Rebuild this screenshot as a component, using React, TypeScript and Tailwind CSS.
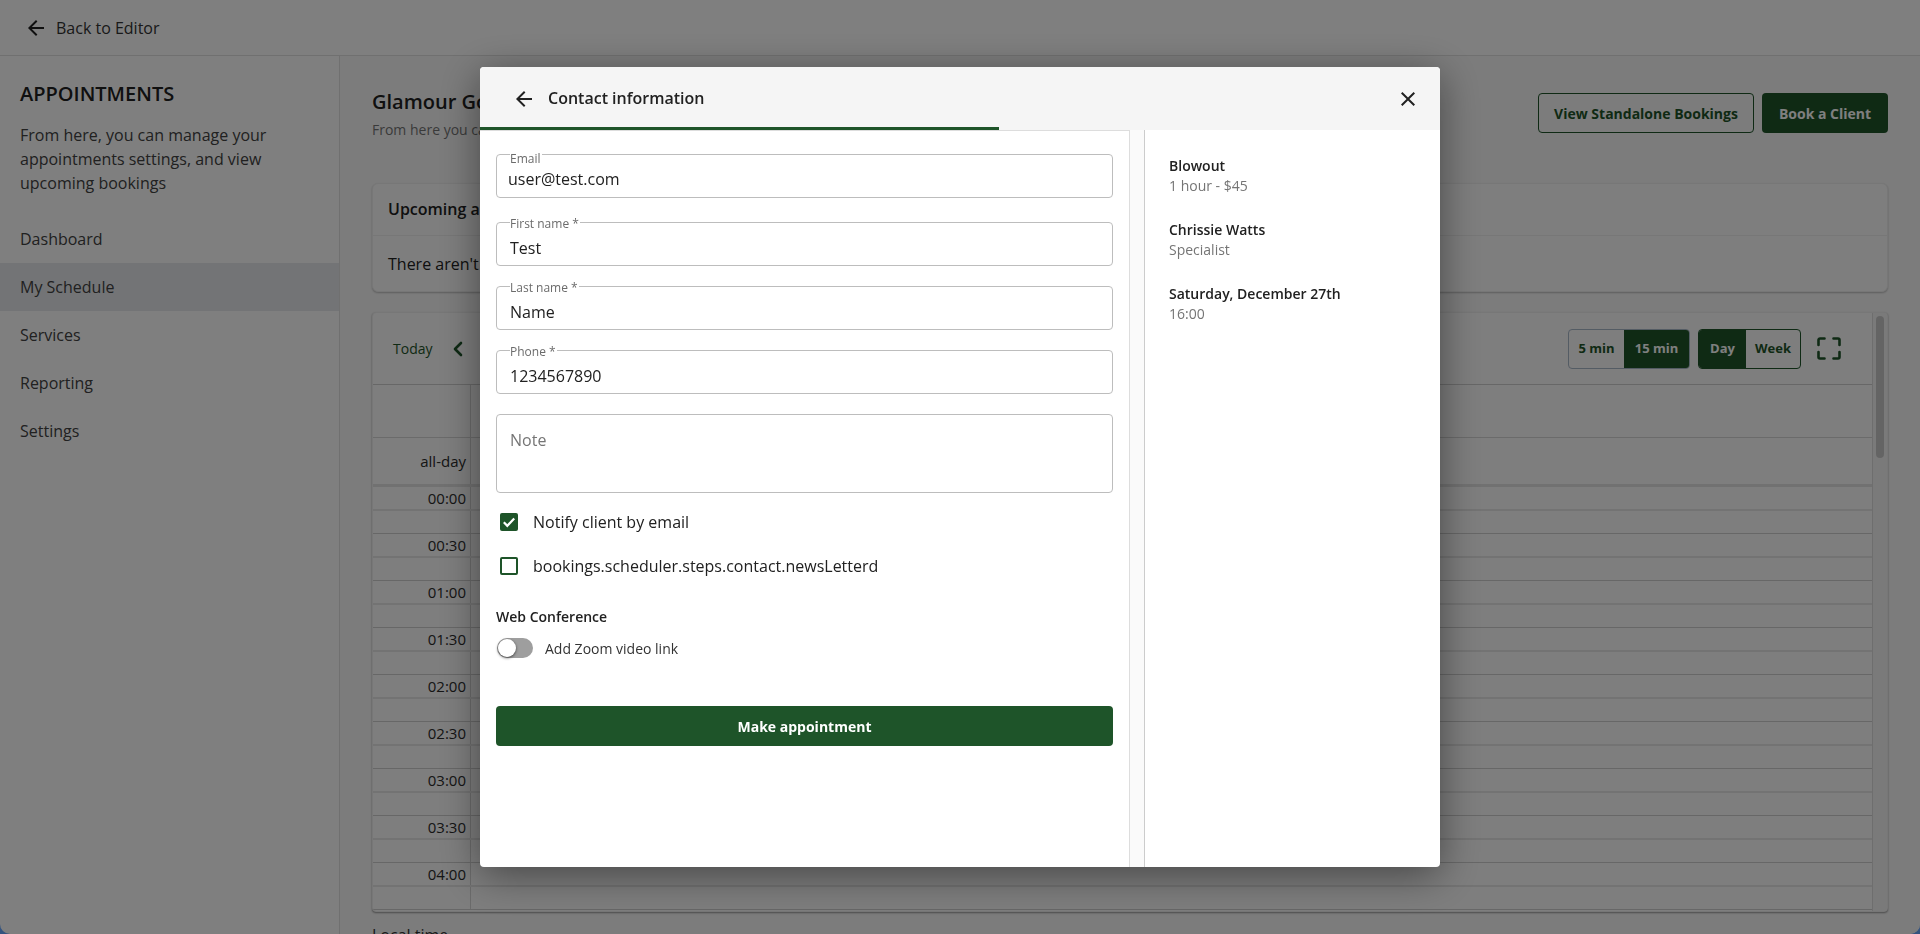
import React from "react";

const BackArrow = ({ className = "" }: { className?: string }) => (
  <svg viewBox="0 0 24 24" width="24" height="24" fill="currentColor" className={className}>
    <path d="M20 11H7.83l5.59-5.59L12 4l-8 8 8 8 1.41-1.41L7.83 13H20v-2z" />
  </svg>
);

const Close = () => (
  <svg viewBox="0 0 24 24" width="24" height="24" fill="currentColor">
    <path d="M19 6.41 17.59 5 12 10.59 6.41 5 5 6.41 10.59 12 5 17.59 6.41 19 12 13.41 17.59 19 19 17.59 13.41 12z" />
  </svg>
);

const Field = ({ label, value, narrow }: { label: string; value: string; narrow?: boolean }) => (
  <div className="relative h-[44px] w-[617px] rounded-[4px] border border-[#bdbdbd] bg-white">
    <span className={`absolute left-[13px] bg-white pr-[1px] text-[12px] leading-[12px] text-[#6b6b6b] ${narrow ? "top-[-2px]" : "top-[-5px]"}`}>{label}</span>
    <div className={`absolute text-[16px] leading-[22px] text-[#212121] ${narrow ? "left-[11px] top-[13px]" : "left-[13px] top-[14px]"}`}>{value}</div>
  </div>
);

const times = ["00:00", "00:30", "01:00", "01:30", "02:00", "02:30", "03:00", "03:30", "04:00"];

const NavItem = ({ label, active }: { label: string; active?: boolean }) => (
  <div className={`flex h-[48px] items-center px-5 text-[16px] text-[#424242] ${active ? "bg-[#e6e9ed]" : ""}`}>{label}</div>
);

const Seg = ({ label, active, w }: { label: string; active?: boolean; w: string }) => (
  <div className={`flex h-full items-center justify-center text-[13px] font-bold ${w} ${active ? "bg-[#1e5429] text-white" : "text-[#1e5429]"}`}>{label}</div>
);

export default function App() {
  return (
    <div className="relative h-[934px] w-full overflow-hidden bg-[#6aa8ff] font-['Open_Sans',sans-serif]">
      <div className="flex h-full flex-col overflow-hidden rounded-b-[10px] bg-white">
        <header className="flex h-[56px] shrink-0 items-center border-b border-[#e0e0e0] pl-6 text-[#212121]">
          <BackArrow />
          <span className="ml-2 text-[16px] text-[#333]">Back to Editor</span>
        </header>
        <div className="flex min-h-0 flex-1">
          <aside className="w-[340px] shrink-0 border-r border-[#e0e0e0]">
            <h1 className="px-5 pt-[23px] text-[20px] font-semibold leading-[30px] text-[#212121]">APPOINTMENTS</h1>
            <p className="mt-[14px] px-5 text-[16px] leading-[24px] text-[#424242]">
              From here, you can manage your
              <br />
              appointments settings, and view
              <br />
              upcoming bookings
            </p>
            <nav className="mt-[20px]">
              <NavItem label="Dashboard" />
              <NavItem label="My Schedule" active />
              <NavItem label="Services" />
              <NavItem label="Reporting" />
              <NavItem label="Settings" />
            </nav>
          </aside>
          <main className="min-w-0 flex-1 bg-[#f9f9f9] px-8">
            <div className="flex h-[127px] items-start justify-between pt-[37px]">
              <div>
                <div className="mt-[-8px] mb-px text-[20px] font-semibold leading-[34px] text-[#212121]">Glamour Gowns Schedule</div>
                <div className="text-[14px] leading-[20px] text-[#757575]">From here you can manage your schedule</div>
              </div>
              <div className="flex gap-2">
                <div className="flex h-[40px] w-[216px] items-center justify-center rounded-[4px] border border-[#1e5429] text-[14px] font-bold text-[#1e5429]">View Standalone Bookings</div>
                <div className="flex h-[40px] w-[126px] items-center justify-center rounded-[4px] bg-[#1e5429] text-[14px] font-bold text-white">Book a Client</div>
              </div>
            </div>
            <section className="h-[109px] rounded-[6px] border border-[#eeeeee] bg-[#fdfdfd] shadow-[0_1px_2px_rgba(0,0,0,0.25)]">
              <div className="flex h-[52px] items-center border-b border-[#eeeeee] px-[15px] pb-[2px] text-[16px] font-semibold text-[#212121]">Upcoming appointments</div>
              <div className="flex h-[56px] items-center px-[15px] text-[16px] text-[#212121]">There aren't any upcoming appointments</div>
            </section>
            <section className="mt-5 flex h-[600px] overflow-hidden rounded-[4px] border border-[#eeeeee] bg-[#fcfcfc] shadow-[0_1px_2px_rgba(0,0,0,0.4)]">
              <div className="min-w-0 flex-1 border-r border-[#dddddd]">
                <div className="flex h-[72px] items-center justify-between border-b border-[#cfcfcf] pl-5 pr-[31px]">
                  <div className="flex items-center">
                    <span className="text-[14px] font-medium text-[#1e5429]">Today</span>
                    <svg viewBox="0 0 12 16" width="12" height="16" className="ml-[19px] text-[#1e5429]" fill="none" stroke="currentColor" strokeWidth="2.6" strokeLinecap="round" strokeLinejoin="round">
                      <path d="M9 2 3 8l6 6" />
                    </svg>
                  </div>
                  <div className="flex items-center">
                    <div className="flex h-[40px] overflow-hidden rounded-[4px] border border-[#a9b8c9]">
                      <Seg label="5 min" w="w-[55px]" />
                      <Seg label="15 min" active w="w-[65px]" />
                    </div>
                    <div className="ml-2 flex h-[40px] overflow-hidden rounded-[4px] border border-[#1e5429]">
                      <Seg label="Day" active w="w-[47px]" />
                      <Seg label="Week" w="w-[54px]" />
                    </div>
                    <svg viewBox="0 0 24 23" width="24" height="23" className="ml-[16px] text-[#1e5429]" fill="none" stroke="currentColor" strokeWidth="2.6" strokeLinejoin="round" strokeLinecap="round">
                      <path d="M1.500 8V3a1.500 1.500 0 0 1 1.500-1.500H7.500M16.500 1.500H21A1.500 1.500 0 0 1 22.500 3V8M22.500 15v5a1.500 1.500 0 0 1-1.500 1.500H16.500M7.500 21.500H3A1.500 1.500 0 0 1 1.500 20V15" />
                    </svg>
                  </div>
                </div>
                <div className="flex h-[53px] border-b border-[#d6d6d6]">
                  <div className="w-[98px] border-r border-[#d6d6d6]" />
                </div>
                <div className="flex h-[49px] border-b-[3px] border-[#e3e3e3]">
                  <div className="w-[98px] border-r border-[#d6d6d6] pr-[4px] pt-[13px] text-right text-[15px] leading-[20px] text-[#2b2b2b]">all-day</div>
                </div>
                {times.map((t) => (
                  <div key={t} className="flex h-[47px] flex-col border-b border-[#cfcfcf]">
                    <div className="flex h-[24px] border-b-2 border-[#e6e6e6]">
                      <div className="w-[98px] border-r border-[#d6d6d6] pr-[4px] pt-px text-right text-[15px] leading-[20px] text-[#2b2b2b]">{t}</div>
                    </div>
                    <div className="flex-1">
                      <div className="h-full w-[98px] border-r border-[#d6d6d6]" />
                    </div>
                  </div>
                ))}
              </div>
              <div className="w-[14px] shrink-0 bg-[#f5f5f5] pl-[3px] pt-[3px]">
                <div className="h-[142px] w-[8px] rounded-full bg-[#c9c9c9]" />
              </div>
            </section>
            <div className="mt-[11px] text-[16px] leading-[24px] text-[#333]">Local time</div>
          </main>
        </div>
      </div>

      <div className="fixed inset-0 flex items-center justify-center bg-black/50">
        <div className="flex h-[800px] w-[960px] flex-col overflow-hidden rounded-[4px] bg-white shadow-[0_8px_40px_rgba(0,0,0,0.45)]">
          <div className="relative flex h-[63px] shrink-0 items-center justify-between bg-[#f5f5f5] pl-8 pr-5 text-[#212121]">
            <div className="flex items-center">
              <BackArrow />
              <span className="ml-3 mt-[-2px] text-[16px] font-semibold leading-[24px]">Contact information</span>
            </div>
            <Close />
            <div className="absolute bottom-0 left-0 h-[3px] w-[519px] bg-[#1e5429]" />
          </div>
          <div className="flex min-h-0 flex-1">
            <div className="w-[650px] shrink-0 border-r border-t border-[#dddddd] pl-4 pt-[23px]">
              <div className="flex flex-col gap-5">
                <div className="mb-1"><Field label="Email" value="user@test.com" narrow /></div>
                <Field label="First name *" value="Test" />
                <Field label="Last name *" value="Name" />
                <Field label="Phone *" value="1234567890" />
                <div className="h-[79px] w-[617px] rounded-[4px] border border-[#bdbdbd] pl-[13px] pt-[14px] text-[16px] leading-[22px] text-[#757575]">Note</div>
              </div>
              <div className="mt-[7px] flex h-[44px] items-center pl-1">
                <div className="flex h-[18px] w-[18px] items-center justify-center rounded-[2px] bg-[#1e5429]">
                  <svg viewBox="0 0 18 18" width="18" height="18" fill="none" stroke="white" strokeWidth="2.2">
                    <path d="M3.800 9.300 7.300 12.800 14.200 5.400" />
                  </svg>
                </div>
                <span className="ml-[15px] text-[16px] text-[#212121]">Notify client by email</span>
              </div>
              <div className="flex h-[44px] items-center pl-1">
                <div className="h-[18px] w-[18px] rounded-[2px] border-2 border-[#1e5429]" />
                <span className="ml-[15px] text-[16px] text-[#212121]">bookings.scheduler.steps.contact.newsLetterd</span>
              </div>
              <div className="mt-[19px] text-[14px] font-semibold leading-[20px] text-[#212121]">Web Conference</div>
              <div className="mt-[11px] flex h-[20px] items-center pl-px">
                <div className="relative h-[20px] w-[36px] rounded-full bg-[#9e9e9e]">
                  <div className="absolute left-[1px] top-[1px] h-[18px] w-[18px] rounded-full bg-white shadow-[0_1px_3px_rgba(0,0,0,0.6)]" />
                </div>
                <span className="ml-3 text-[14px] text-[#333]">Add Zoom video link</span>
              </div>
              <div className="mt-[48px] flex h-[40px] w-[617px] items-center justify-center rounded-[4px] bg-[#1e5429] text-[14px] font-bold text-white">Make appointment</div>
            </div>
            <div className="w-[14px] shrink-0 bg-[#fafafa]" />
            <div className="flex-1 border-l border-[#cccccc] pl-6 pt-[26px] text-[14px] leading-[20px]">
              <div className="font-semibold text-[#212121]">Blowout</div>
              <div className="text-[#757575]">1 hour - $45</div>
              <div className="mt-[24px] font-semibold text-[#212121]">Chrissie Watts</div>
              <div className="text-[#757575]">Specialist</div>
              <div className="mt-[24px] font-semibold text-[#212121]">Saturday, December 27th</div>
              <div className="text-[#757575]">16:00</div>
            </div>
          </div>
        </div>
      </div>
    </div>
  );
}
